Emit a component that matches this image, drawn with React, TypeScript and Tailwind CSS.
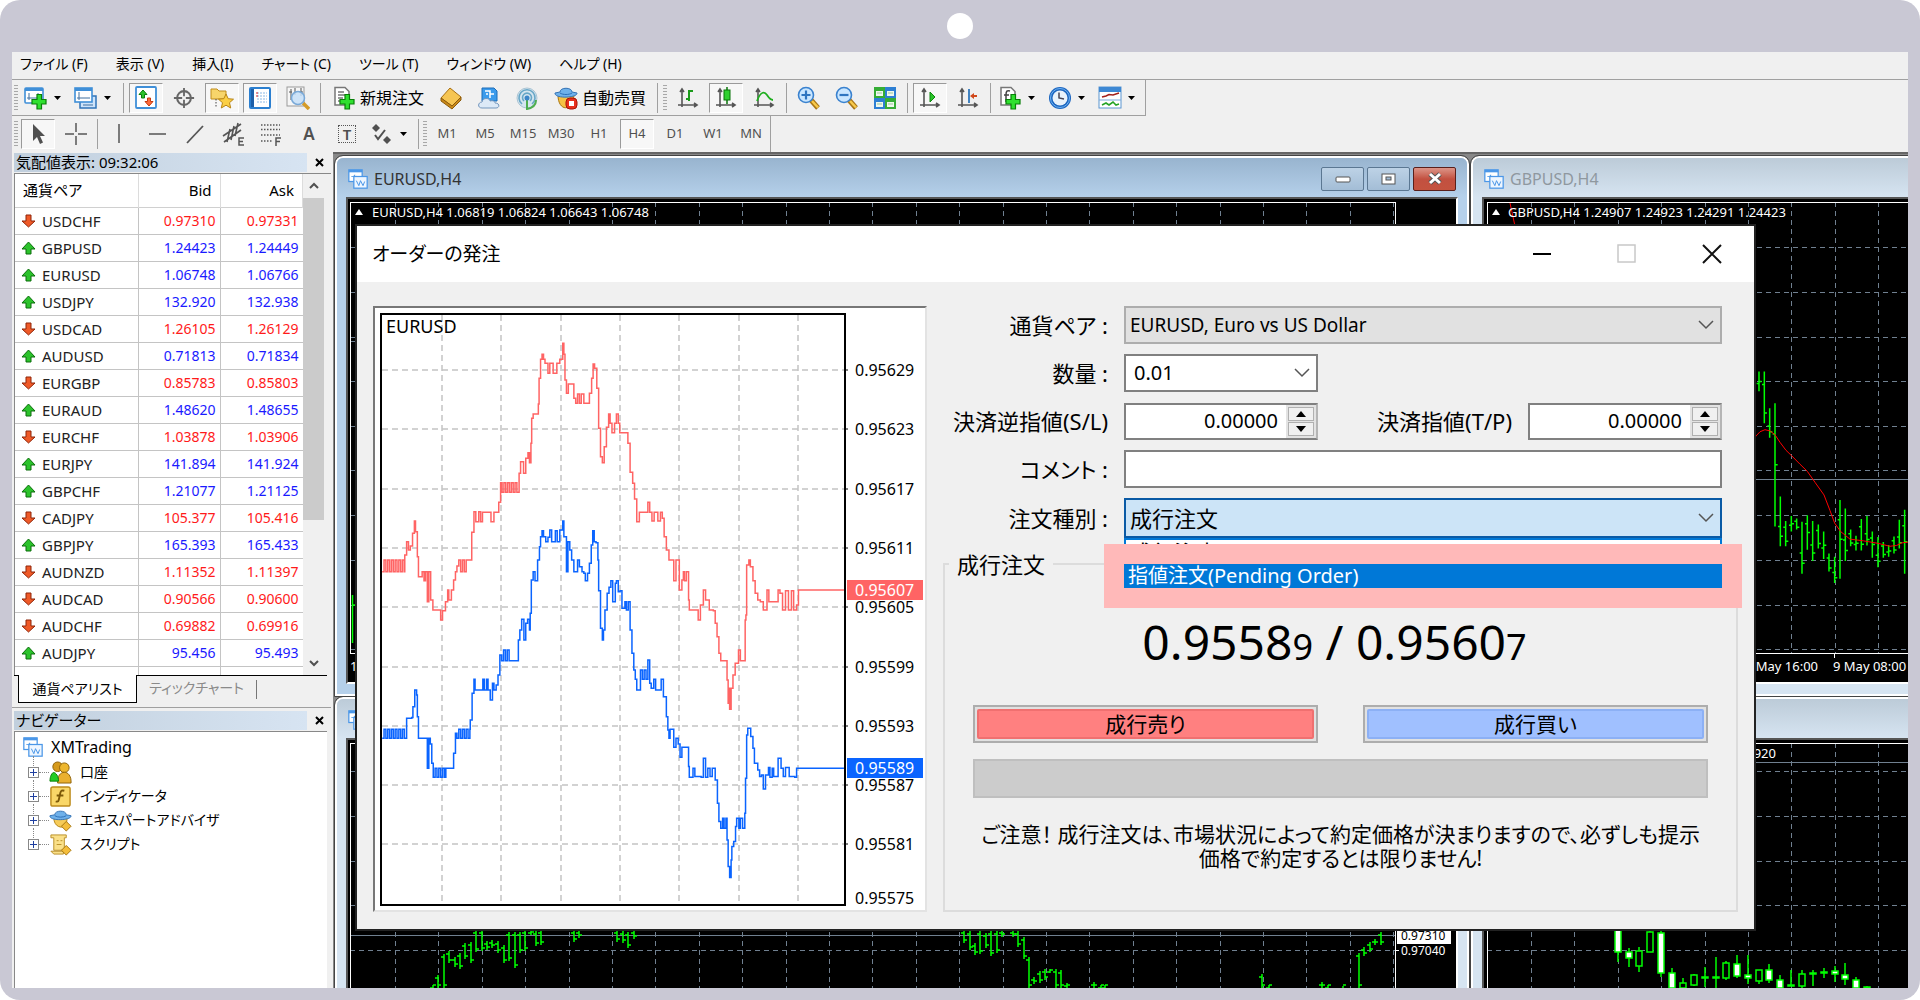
import type { ReactNode } from "react";

type Point = [number, number];

const menus = ["ファイル (F)", "表示 (V)", "挿入(I)", "チャート (C)", "ツール (T)", "ウィンドウ (W)", "ヘルプ (H)"];

const quotes: [string, string, string, boolean][] = [
  ["USDCHF", "0.97310", "0.97331", false],
  ["GBPUSD", "1.24423", "1.24449", true],
  ["EURUSD", "1.06748", "1.06766", true],
  ["USDJPY", "132.920", "132.938", true],
  ["USDCAD", "1.26105", "1.26129", false],
  ["AUDUSD", "0.71813", "0.71834", true],
  ["EURGBP", "0.85783", "0.85803", false],
  ["EURAUD", "1.48620", "1.48655", true],
  ["EURCHF", "1.03878", "1.03906", false],
  ["EURJPY", "141.894", "141.924", true],
  ["GBPCHF", "1.21077", "1.21125", true],
  ["CADJPY", "105.377", "105.416", false],
  ["GBPJPY", "165.393", "165.433", true],
  ["AUDNZD", "1.11352", "1.11397", false],
  ["AUDCAD", "0.90566", "0.90600", false],
  ["AUDCHF", "0.69882", "0.69916", false],
  ["AUDJPY", "95.456", "95.493", true],
];

const timeframes = ["M1", "M5", "M15", "M30", "H1", "H4", "D1", "W1", "MN"];

// Quick up/down ticks between two price levels
const wiggle = (from: number, to: number, top: number, bottom: number): Point[] => {
  const points: Point[] = [];
  for (let x = from, i = 0; x <= to; x += 5, i++) points.push([x, i % 2 ? top : bottom]);
  return points;
};

// Prices jump from tick to tick, so the line is drawn as steps
const stepPath = (points: Point[]) => points.map(([x, y], i) => (i ? `H${x}V${y}` : `M${x} ${y}`)).join("");

const askLine: Point[] = [
  ...wiggle(60, 120, 780, 815),
  [121, 765], [126, 725], [131, 750], [136, 738], [142, 700], [147, 663], [150, 695], [155, 770], [158, 830], [163, 830],
  [168, 815], [173, 842], [177, 815], [182, 905], [186, 815], [191, 900], [197, 930], [211, 930], [218, 960], [223, 932],
  [231, 905], [237, 870], [240, 900], [247, 870], [253, 840], [258, 815], [262, 798], [267, 780], [272, 815], [277, 780],
  [282, 815], [287, 780], [298, 780], [302, 697], [308, 635], [313, 665], [321, 635], [326, 665], [331, 637], [347, 637],
  [354, 665], [362, 637], [371, 637], [375, 607], [380, 548],
  ...wiggle(384, 425, 548, 577),
  [430, 520], [434, 485], [438, 485], [442, 520], [448, 475], [454, 458], [458, 488], [462, 430], [464, 355], [468, 342],
  [478, 342], [482, 312], [484, 235], [488, 178], [492, 163], [496, 178], [500, 190], [504, 190], [508, 220], [513, 190],
  [518, 190], [522, 220], [526, 220], [532, 190], [540, 178], [548, 130], [551, 163], [554, 240], [558, 280], [563, 252],
  [573, 252], [578, 295], [583, 310], [588, 282], [593, 310], [598, 282], [605, 310], [614, 310], [620, 280], [626, 235],
  [630, 192], [634, 205], [640, 265], [645, 385], [650, 470], [655, 488], [660, 440], [666, 382], [672, 342], [676, 370],
  [681, 398], [688, 370], [693, 342], [698, 370], [702, 398], [718, 398], [724, 430], [730, 517], [737, 550], [742, 597],
  [748, 665], [755, 637], [773, 637], [778, 607], [783, 637], [789, 663], [795, 637], [800, 637], [805, 663], [812, 637],
  [817, 655], [822, 710], [828, 750], [835, 780], [845, 780], [848, 842], [854, 780], [863, 870], [870, 840], [874, 815],
  [877, 842], [882, 815], [888, 900], [890, 930], [908, 930], [914, 960], [920, 915], [928, 870], [934, 900], [944, 930],
  [955, 932], [960, 970], [965, 1010], [970, 1060], [975, 1082], [988, 1082], [992, 1140], [995, 1210], [996, 1165],
  [999, 1228], [1003, 1165], [1008, 1125], [1014, 1090], [1023, 1050], [1028, 1082], [1040, 1082], [1041, 960],
  [1043, 945], [1045, 795], [1051, 780], [1055, 800], [1062, 842], [1068, 880], [1075, 900], [1082, 905], [1090, 930],
  [1100, 870], [1105, 905], [1122, 905], [1130, 870], [1135, 880], [1142, 930], [1150, 872], [1158, 930], [1166, 872],
  [1172, 930], [1180, 915], [1185, 870], [1308, 870],
];

const bidLine: Point[] = [
  ...wiggle(60, 120, 1288, 1315),
  [126, 1255], [140, 1253], [143, 1220], [148, 1170], [153, 1185], [155, 1250], [158, 1315], [176, 1315], [182, 1405],
  [186, 1315], [190, 1332], [194, 1390],
  ...wiggle(198, 228, 1405, 1432),
  [232, 1405], [248, 1405], [253, 1360], [258, 1300],
  ...wiggle(262, 297, 1288, 1315),
  [298, 1260], [303, 1180], [308, 1138], [311, 1170], [326, 1170], [332, 1138], [336, 1170], [342, 1138], [346, 1170],
  [352, 1200], [358, 1150], [362, 1170], [368, 1155], [373, 1125], [378, 1065],
  ...wiggle(383, 405, 1050, 1082),
  [424, 1082], [428, 1020], [432, 990], [437, 958], [443, 1020], [448, 970], [453, 958], [458, 990], [460, 940],
  [463, 840], [468, 815], [473, 842], [480, 780], [485, 740], [488, 710], [492, 692], [496, 710], [502, 725], [508, 712],
  [513, 690], [518, 725], [528, 692], [533, 725], [540, 690], [548, 663], [551, 710], [558, 815], [562, 725], [567, 750],
  [572, 780], [578, 815], [588, 780], [593, 800], [600, 815], [605, 820], [609, 842], [615, 820], [620, 790], [625, 735],
  [629, 692], [633, 725], [638, 728], [643, 780], [645, 872], [650, 985], [655, 1020], [658, 990], [662, 930], [668, 880],
  [673, 862], [678, 842], [683, 905], [690, 850], [693, 842], [698, 875], [703, 872], [708, 925], [716, 905], [720, 930],
  [725, 905], [730, 990], [735, 1060], [740, 1110], [744, 1138], [748, 1170], [753, 1170], [758, 1110], [763, 1138],
  [768, 1110], [773, 1138], [778, 1080], [783, 1150], [787, 1165], [794, 1138], [799, 1170], [810, 1170], [814, 1138],
  [820, 1190], [828, 1250], [832, 1290], [835, 1315], [838, 1288], [848, 1342], [854, 1315], [860, 1332], [865, 1372],
  [870, 1342], [885, 1342], [888, 1400], [890, 1432], [900, 1405], [905, 1430], [922, 1432], [928, 1375], [934, 1432],
  [940, 1405], [946, 1430], [952, 1405], [960, 1440], [966, 1510], [970, 1565], [975, 1585], [980, 1555], [984, 1585],
  [989, 1555], [992, 1620], [995, 1700], [999, 1733], [1003, 1680], [1005, 1640], [1010, 1625], [1015, 1580],
  [1018, 1555], [1024, 1585], [1028, 1555], [1034, 1585], [1040, 1540], [1042, 1435], [1045, 1305], [1048, 1285],
  [1056, 1310], [1062, 1345], [1066, 1390], [1075, 1410], [1080, 1430], [1085, 1425], [1090, 1467], [1096, 1425],
  [1104, 1403], [1108, 1432], [1114, 1405], [1118, 1430], [1130, 1375], [1138, 1405], [1144, 1430], [1150, 1403],
  [1160, 1430], [1175, 1432], [1180, 1405], [1308, 1405],
];

const scaleLabels = ["0.95629", "0.95623", "0.95617", "0.95611", "0.95605", "0.95599", "0.95593", "0.95587", "0.95581"];

// [x, high, low]
const gbpBars: [number, number, number][] = [
  [177, 75, 122], [193, 75, 198], [209, 162, 232], [225, 150, 443], [241, 372, 490], [257, 430, 490], [274, 418, 455],
  [290, 424, 450], [306, 432, 555], [322, 416, 498], [338, 430, 525], [355, 438, 495], [371, 455, 520], [387, 507, 550],
  [404, 515, 577], [420, 380, 567], [436, 400, 525], [452, 450, 490], [468, 465, 500], [484, 425, 500], [501, 418, 488],
  [517, 455, 517], [534, 468, 540], [550, 480, 517], [566, 487, 515], [582, 467, 507], [598, 427, 495], [614, 403, 555],
];

const chfBars: [number, number, number][] = [
  [433, 985, 988], [438, 975, 988], [444, 954, 988], [449, 951, 963], [455, 957, 967], [460, 953, 969], [465, 943, 959],
  [471, 942, 963], [476, 930, 952], [482, 930, 951], [487, 941, 950], [492, 940, 948], [498, 941, 953], [504, 945, 963],
  [509, 932, 961], [515, 932, 968], [520, 932, 953], [525, 930, 951], [531, 930, 935], [536, 931, 946], [541, 930, 945],
  [574, 930, 942], [579, 930, 938], [617, 930, 942], [623, 931, 943], [628, 932, 948], [634, 930, 939], [964, 930, 943],
  [970, 931, 950], [975, 943, 955], [980, 931, 954], [986, 933, 948], [991, 931, 956], [997, 931, 953], [1002, 930, 937],
  [1013, 930, 937], [1018, 931, 947], [1024, 937, 959], [1029, 957, 988], [1034, 977, 984], [1040, 971, 983],
  [1045, 969, 980], [1050, 969, 973], [1056, 969, 988], [1061, 970, 988], [1067, 983, 988], [1094, 982, 988],
  [1101, 985, 988], [1105, 985, 988], [1262, 974, 988], [1269, 985, 988], [1322, 982, 988], [1328, 985, 988],
  [1343, 986, 988], [1359, 953, 988], [1364, 947, 956], [1370, 942, 952], [1375, 939, 945], [1381, 932, 945],
];

// [x, high, low, body top, body bottom, filled]
const candles: [number, number, number, number, number, boolean][] = [
  [1618, 928, 962, 930, 952, true], [1629, 948, 967, 952, 958, true], [1639, 947, 972, 951, 966, false],
  [1650, 930, 952, 932, 952, false], [1661, 930, 977, 933, 973, true], [1672, 968, 988, 973, 988, true],
  [1683, 978, 988, 983, 988, false], [1694, 974, 986, 975, 985, false], [1705, 967, 987, 977, 978, true],
  [1716, 957, 988, 977, 978, true], [1726, 961, 980, 963, 978, false], [1737, 955, 978, 964, 976, true],
  [1748, 955, 984, 975, 978, true], [1759, 970, 984, 970, 981, false], [1769, 964, 983, 970, 980, true],
  [1780, 975, 988, 980, 988, true], [1791, 970, 986, 985, 986, true], [1802, 970, 988, 974, 986, false],
  [1813, 970, 986, 973, 974, true], [1824, 968, 978, 972, 973, true], [1835, 966, 982, 971, 974, true],
  [1845, 963, 985, 975, 979, true], [1856, 977, 988, 980, 988, true], [1867, 986, 988, 987, 988, true],
];

const Grip = () => (
  <span className="mr-px ml-0.5 h-[26px] w-1 shrink-0 bg-[repeating-linear-gradient(#a8a8a8_0_1px,#efefef_1px_3px)]" />
);

const Separator = () => <span className="mx-0.5 h-[30px] w-px shrink-0 bg-[#a0a0a0]" />;

const Caret = () => (
  <svg width="7" height="4" viewBox="0 0 7 4" className="shrink-0">
    <path d="M0 0h7L3.500 4z" fill="#000" />
  </svg>
);

type ToolProps = { label: string; pressed?: boolean; caret?: boolean; text?: string; children?: ReactNode };

const Tool = ({ label, pressed, caret, text, children }: ToolProps) => (
  <button
    type="button"
    aria-label={label}
    aria-pressed={pressed}
    className={`flex h-[30px] shrink-0 items-center ${
      text ? "gap-1 px-2" : caret ? "w-[50px] gap-1.5 pl-1" : "mx-0.5 w-[34px] justify-center"
    } ${pressed ? "border border-t-[#9a9a9a] border-l-[#9a9a9a] border-r-white border-b-white bg-[#f7f7f7]" : ""}`}
  >
    {children}
    {text && <span className="text-[16px] leading-5 whitespace-nowrap">{text}</span>}
    {caret && <Caret />}
  </button>
);

const Icon = ({ children, size = 24 }: { children: ReactNode; size?: number }) => (
  <svg width={size} height={size} viewBox="0 0 24 24" fill="none" className="shrink-0">
    {children}
  </svg>
);

const Plus = () => (
  <path d="M13 8.500h4.500v5H22v4.500h-4.500v5H13v-5H8v-4.500h5z" fill="#2fe02f" stroke="#087f08" strokeWidth="1.200" />
);

const Sheet = () => <path d="M3 1.500h10l4 4V19H3z" fill="#fff" stroke="#777" strokeWidth="1.500" />;

const Axes = () => (
  <path d="M6 4v17M2 19h18M4 6l2-3 2 3M18 17l3 2-3 2" stroke="#555" strokeWidth="1.600" />
);

const ChartIcon = () => (
  <Icon size={20}>
    <rect x="1" y="1" width="16" height="14" fill="#fff" stroke="#4b97e8" strokeWidth="1.500" />
    <path d="M1 2.500h16" stroke="#4b97e8" strokeWidth="3" />
    <path d="M4 9h3l1-2v4l2-2h4" stroke="#4b97e8" />
    <rect x="7" y="9" width="16" height="14" fill="#eef6ff" stroke="#4b97e8" strokeWidth="1.500" />
    <path d="m10 14 3 6 2-6 3 6 2-5" stroke="#4b97e8" strokeWidth="1.200" />
  </Icon>
);

const Hat = () => (
  <>
    <path d="M6 6c0-5 12-5 12 0l5 1c1 5-23 6-22 0z" fill="#6fb1ea" stroke="#3573b5" />
    <path d="M6 7c3 2 9 2 12 0" stroke="#2d6fb5" />
  </>
);

const Magnifier = ({ sign }: { sign: string }) => (
  <Icon>
    <path d="m14 14 7 8" stroke="#a87516" strokeWidth="5" />
    <path d="m15 15 6 6.500" stroke="#f8c94a" strokeWidth="2.500" />
    <circle cx="9" cy="9" r="7.500" fill="#c9e6ff" stroke="#3a82cf" strokeWidth="1.600" />
    <path d={sign} stroke="#2f75c0" strokeWidth="2.200" />
  </Icon>
);

const Arrow = ({ up }: { up: boolean }) => (
  <svg width="15" height="14" viewBox="0 0 15 14" className="shrink-0">
    {up ? (
      <path d="M7.500 1 14 8h-4v5H5V8H1z" fill="#2cc32c" stroke="#0b6d0b" />
    ) : (
      <path d="M7.500 13 1 7h4V1h5v6h4z" fill="#ef5a28" stroke="#8f2408" />
    )}
  </svg>
);

const Toolbars = () => (
  <div className="shrink-0 border-t border-[#a0a0a0] bg-[#f0f0f0]">
    <div className="flex">
      <div className="flex h-9 items-center gap-px border-r border-b border-[#a0a0a0] pr-px">
        <Grip />
        <div className="flex">
          <Tool label="新規チャート" caret>
            <Icon>
              <rect x="1" y="2" width="18" height="15" rx="1" fill="#fff" stroke="#3f8fd8" strokeWidth="1.600" />
              <path d="M1 3.500h18" stroke="#3f8fd8" strokeWidth="3" />
              <path d="M5 7v7M3 12h13M14 7v3" stroke="#3f6f9f" />
              <Plus />
            </Icon>
          </Tool>
          <Tool label="チャートの組表示" caret>
            <Icon>
              <rect x="6" y="10" width="16" height="12" fill="#cfe4fa" stroke="#2f73b8" strokeWidth="1.500" />
              <rect x="1" y="2" width="17" height="14" fill="#fff" stroke="#3f8fd8" strokeWidth="1.600" />
              <path d="M1 3.500h17" stroke="#3f8fd8" strokeWidth="3" />
              <path d="M5 6v8M3 12h13M9 19h10" stroke="#3f6f9f" />
            </Icon>
          </Tool>
        </div>
        <Separator />
        <div className="flex">
          <Tool label="気配値表示" pressed>
            <Icon>
              <rect x="2" y="1" width="20" height="21" rx="1" fill="#fff" stroke="#3f8fd8" strokeWidth="1.800" />
              <path d="m9 4 4 4.500h-2.500V12h-3V8.500H5z" fill="#2cc32c" stroke="#0b7d0b" />
              <path d="m15 20-4-4.500h2.500V12h3v3.500H19z" fill="#ff6a3a" stroke="#c43a10" />
            </Icon>
          </Tool>
          <Tool label="データウィンドウ">
            <Icon size={22}>
              <circle cx="12" cy="12" r="7.500" stroke="#666" strokeWidth="2.200" />
              <path d="M12 1v9M12 14v9M1 12h9M14 12h9" stroke="#666" strokeWidth="2" />
            </Icon>
          </Tool>
          <Tool label="ナビゲーター" pressed>
            <Icon>
              <path d="M1 3h6l2 2h7v8H1z" fill="#f7d56b" stroke="#c08d1c" />
              <path d="M6 13v9" stroke="#444" strokeDasharray="1.500 1.500" />
              <path d="m16 8 2.200 4.700 5.300.5-4 3.500 1.200 5.300-4.700-2.800-4.700 2.800 1.200-5.300-4-3.500 5.300-.5z" fill="#fbcf45" stroke="#b98516" />
            </Icon>
          </Tool>
          <Tool label="ターミナル" pressed>
            <Icon>
              <rect x="2" y="2" width="20" height="20" rx="1" fill="#fff" stroke="#2b7fd0" strokeWidth="2" />
              <path d="M4.500 3v18" stroke="#1e5fa8" strokeWidth="3" />
              <path d="M9 7h10M9 10h10M9 13h10M9 16h10" stroke="#8ab8e6" strokeDasharray="2 1" />
              <path d="M8 7h2M8 10h2" stroke="#d22" />
            </Icon>
          </Tool>
          <Tool label="ストラテジーテスター">
            <Icon>
              <rect x="1" y="1" width="17" height="19" fill="#f6f6f6" stroke="#999" />
              <path d="M5 3v11M9 2v7M15 2v8M3 6h3M13 6h4" stroke="#555" />
              <path d="m17 17 6 6" stroke="#d59b28" strokeWidth="3.500" />
              <circle cx="12" cy="12" r="6.500" fill="#c5dff8" fillOpacity=".85" stroke="#79a9d8" strokeWidth="1.500" />
            </Icon>
          </Tool>
        </div>
        <Separator />
        <div className="flex">
          <Tool label="新規注文" text="新規注文">
            <Icon>
              <Sheet />
              <path d="M6 6h6M6 9h8M6 12h5M6 15h4" stroke="#777" strokeWidth="1.500" />
              <Plus />
            </Icon>
          </Tool>
          <Tool label="メタエディター">
            <Icon>
              <path d="M2 12 11 2l11 9-9 9z" fill="#f6c552" stroke="#a86f12" />
              <path d="m2 12 11 8 9-9v3l-9 9L2 15z" fill="#c98918" stroke="#8c5b0c" />
            </Icon>
          </Tool>
          <Tool label="マーケット">
            <Icon>
              <path d="M5 2h12l3 3v10H5z" fill="#3a9bec" stroke="#1d6cb7" />
              <path d="M8 5h5v7M13 8h4M9 8h2" stroke="#fff" strokeWidth="1.500" />
              <path d="M5 22c-5 0-4-6 0-6 1-5 8-4 8-1 4-1 5 1 5 2 5 0 5 5 1 5z" fill="#dce9f7" stroke="#7396bd" />
            </Icon>
          </Tool>
          <Tool label="シグナル">
            <Icon>
              <circle cx="12" cy="12" r="10" fill="#d5e5ef" stroke="#aac4d4" />
              <path d="M7 18a8 8 0 1 1 10 0M9 15a4.500 4.500 0 1 1 6 0" stroke="#68a7c7" strokeWidth="1.600" />
              <path d="M12 12v11c5-1 9-4 9-9" stroke="#4fae4f" strokeWidth="2" />
              <circle cx="12" cy="12" r="2.500" fill="#3c86c8" />
            </Icon>
          </Tool>
          <Tool label="自動売買" text="自動売買">
            <Icon>
              <path d="M4 9c0 17 15 17 16 0z" fill="#f6c244" stroke="#a8740d" />
              <Hat />
              <rect x="12" y="12" width="11" height="11" rx="4" fill="#e8301c" stroke="#a81408" />
              <rect x="15" y="15" width="5" height="5" fill="#fff" />
            </Icon>
          </Tool>
        </div>
        <Separator />
        <Grip />
        <div className="flex">
          <Tool label="バーチャート">
            <Icon>
              <Axes />
              <path d="M13 4v11M10 13h3M13 5h4" stroke="#1a9a1a" strokeWidth="2" />
            </Icon>
          </Tool>
          <Tool label="ローソク足" pressed>
            <Icon>
              <Axes />
              <path d="M13 1v17" stroke="#087508" strokeWidth="1.500" />
              <rect x="10" y="4" width="6" height="10" fill="#2fd02f" stroke="#087508" />
            </Icon>
          </Tool>
          <Tool label="ラインチャート">
            <Icon>
              <Axes />
              <path d="M5 15C9 4 13 6 15 9s3 5 6 5" stroke="#1fae1f" strokeWidth="1.800" />
            </Icon>
          </Tool>
        </div>
        <Separator />
        <div className="flex">
          <Tool label="ズームイン">
            <Magnifier sign="M9 4.500v9M4.500 9h9" />
          </Tool>
          <Tool label="ズームアウト">
            <Magnifier sign="M4.500 9h9" />
          </Tool>
          <Tool label="チャートの整列">
            <Icon>
              <path d="M1 1h11v11H1zM12 12h11v11H12z" fill="#35ad35" />
              <path d="M12 1h11v11H12zM1 12h11v11H1z" fill="#2d7fd3" />
              <path d="M3 5h7v5H3zM14 5h7v5h-7zM3 16h7v5H3zM14 16h7v5h-7z" fill="#eef8ee" />
              <path d="M4 7h5M15 7h5M4 18h5M15 18h5" stroke="#9bc79b" />
            </Icon>
          </Tool>
        </div>
        <Separator />
        <div className="flex">
          <Tool label="自動スクロール" pressed>
            <Icon>
              <Axes />
              <path d="m12 6 5 5-5 5z" fill="#2bc52b" stroke="#0c850c" />
            </Icon>
          </Tool>
          <Tool label="チャートシフト">
            <Icon>
              <Axes />
              <path d="M13 3v14" stroke="#2e76bb" strokeWidth="1.800" />
              <path d="m14 10 4-3v2h3v2h-3v2z" fill="#d1481b" />
            </Icon>
          </Tool>
        </div>
        <Separator />
        <div className="flex">
          <Tool label="インディケータ" caret>
            <Icon>
              <Sheet />
              <path d="M12 5c-3-1-4 0-4 4v7M6 9h5" stroke="#444" strokeWidth="1.500" />
              <Plus />
            </Icon>
          </Tool>
          <Tool label="時間軸設定" caret>
            <Icon>
              <circle cx="12" cy="12" r="11" fill="#1c66c0" />
              <circle cx="12" cy="12" r="9.500" stroke="#6fb4f5" />
              <circle cx="12" cy="12" r="7.500" fill="#e8f2fb" />
              <path d="M11 6.500V12l5 1" stroke="#445" strokeWidth="1.500" />
            </Icon>
          </Tool>
          <Tool label="定型チャート" caret>
            <Icon>
              <rect x="1" y="1" width="22" height="21" fill="#fff" stroke="#5b95d0" />
              <path d="M1 3.500h22" stroke="#3d88d4" strokeWidth="5" />
              <path d="M1 14h22" stroke="#7aa9da" />
              <path d="m4 11 4-1 3-1.500 4 .5 6-2" stroke="#a3201a" strokeWidth="1.600" />
              <path d="m4 19 4-2 3 2 4-3 3 3 3-1" stroke="#25a325" strokeWidth="1.600" />
            </Icon>
          </Tool>
        </div>
      </div>
    </div>

    <div className="flex h-9 items-center">
      <Grip />
      <div className="flex">
        <Tool label="カーソル" pressed>
          <Icon>
            <path d="M7 2v17l4-4 3 7 3-1.500-3-6.500h5z" fill="#505050" />
          </Icon>
        </Tool>
        <Tool label="クロスヘア">
          <Icon>
            <path d="M12 1v9M12 14v9M1 12h9M14 12h9" stroke="#555" strokeWidth="1.500" />
          </Icon>
        </Tool>
        <Separator />
        <Tool label="垂直線">
          <Icon><path d="M12 2v19" stroke="#555" strokeWidth="1.500" /></Icon>
        </Tool>
        <Tool label="水平線">
          <Icon><path d="M4 12h17" stroke="#555" strokeWidth="1.500" /></Icon>
        </Tool>
        <Tool label="トレンドライン">
          <Icon><path d="M4 21 20 4" stroke="#555" strokeWidth="1.800" /></Icon>
        </Tool>
        <Tool label="チャネル">
          <Icon>
            <path d="M2 14 20 2M3 20 20 8M6 20l3-13M10 18l3-14M14 14l3-13" stroke="#555" strokeWidth="1.600" />
            <path d="M23 16h-5v7h5M18 19.500h4" stroke="#555" strokeWidth="1.500" />
          </Icon>
        </Tool>
        <Tool label="フィボナッチ">
          <Icon>
            <path d="M2 3h19M2 7.500h19M2 13h19M2 19h12" stroke="#555" strokeWidth="1.500" strokeDasharray="1.500 1.500" />
            <path d="M17 24v-8h5M17 19.500h4" stroke="#555" strokeWidth="1.500" />
          </Icon>
        </Tool>
        <Tool label="テキスト">
          <span className="text-[17px] font-semibold text-[#505050]">A</span>
        </Tool>
        <Tool label="テキストラベル">
          <span className="flex size-[18px] items-center justify-center border border-dotted border-[#555] text-[15px] font-semibold text-[#505050]">T</span>
        </Tool>
        <Tool label="アロー" caret>
          <Icon>
            <path d="m6 2 4 4-4 4-4-4zM17 14l4 4-4 4-4-4z" fill="#505050" />
            <path d="m5 13 3 4 7-9" stroke="#505050" strokeWidth="2" />
          </Icon>
        </Tool>
      </div>
      <Separator />
      <Grip />
      <div className="flex h-full items-center border-r border-[#a0a0a0]">
        {timeframes.map((frame) => (
          <Tool key={frame} label={frame} pressed={frame === "H4"}>
            <span className="text-[13px] text-[#505050]">{frame}</span>
          </Tool>
        ))}
      </div>
    </div>
  </div>
);

const PanelHeader = ({ title }: { title: string }) => (
  <div className="flex h-5 shrink-0 items-center pl-0.5">
    <h2 className="flex-1 bg-linear-to-r from-[#c1cfdd] to-[#d7e4f2] pl-0.5 text-[15px] leading-[19px]">{title}</h2>
    <button type="button" aria-label={`${title} を閉じる`} className="flex w-6 justify-center">
      <svg width="9" height="9" viewBox="0 0 9 9">
        <path d="m1 1 7 7M8 1 1 8" stroke="#000" strokeWidth="2" />
      </svg>
    </button>
  </div>
);

const MarketWatch = () => (
  <section className="flex flex-col">
    <PanelHeader title="気配値表示: 09:32:06" />
    <div className="mt-px ml-0.5 flex h-[502px] overflow-hidden border-t border-l border-[#888] bg-white">
      <table className="w-[288px] shrink-0 self-start border-collapse">
        <thead>
          <tr className="h-[33px] border-b border-[#d0d0d0] text-[15px]">
            <th className="w-[123px] border-r border-[#dcdcdc] pl-2 text-left font-normal">通貨ペア</th>
            <th className="w-[82px] border-r border-[#dcdcdc] pr-2 text-right font-normal">Bid</th>
            <th className="border-r border-[#dcdcdc] pr-2 text-right font-normal">Ask</th>
          </tr>
        </thead>
        <tbody>
          {quotes.map(([symbol, bid, ask, up]) => (
            <tr key={symbol} className="h-[27px] border-b border-[#c4c4c4]">
              <td className="border-r border-[#c4c4c4] pl-1.5 text-[15px] leading-5 text-[#222]">
                <span className="flex items-center gap-1.5">
                  <Arrow up={up} />
                  {symbol}
                </span>
              </td>
              <td className={`border-r border-[#c4c4c4] pr-1 text-right text-[14px] leading-5 ${up ? "text-[#1a1aff]" : "text-[#ff1a1a]"}`}>
                {bid}
              </td>
              <td className={`pr-1 text-right text-[14px] leading-5 ${up ? "text-[#1a1aff]" : "text-[#ff1a1a]"}`}>{ask}</td>
            </tr>
          ))}
          <tr className="h-[27px]">
            <td className="border-r border-[#c4c4c4]" />
            <td className="border-r border-[#c4c4c4]" />
            <td />
          </tr>
        </tbody>
      </table>
      <div className="flex w-[21px] flex-col items-center bg-[#f0f0f0]">
        <svg width="10" height="8" viewBox="0 0 10 8" className="my-2">
          <path d="m1 6 4-4 4 4" fill="none" stroke="#505050" strokeWidth="2" />
        </svg>
        <div className="h-[322px] w-full bg-[#cbcbcb]" />
        <svg width="10" height="8" viewBox="0 0 10 8" className="mt-auto mb-2">
          <path d="m1 2 4 4 4-4" fill="none" stroke="#505050" strokeWidth="2" />
        </svg>
      </div>
      <div className="flex-1 bg-[#f0f0f0]" />
    </div>
    <div className="mr-1 ml-0.5 flex h-7 items-start border-t border-black text-[14px] leading-6">
      <button type="button" className="-mt-px ml-1 h-7 w-[119px] border border-t-0 border-black bg-white">
        通貨ペアリスト
      </button>
      <button type="button" className="ml-3 text-[#8a8a8a]">ティックチャート</button>
      <span className="mt-1 ml-3 h-[19px] w-px bg-[#777]" />
    </div>
  </section>
);

const tree: [string, ReactNode][] = [
  [
    "口座",
    <>
      <circle cx="9" cy="6" r="5" fill="#d69a1c" stroke="#8d6108" />
      <circle cx="16" cy="7" r="5" fill="#edb62e" stroke="#8d6108" />
      <path d="M9 23c-1-15 15-15 14 0z" fill="#eab030" stroke="#8d6108" />
      <path d="M1 21c0-5 2-9 4-9s5 4 5 9z" fill="#22cc22" stroke="#0a7d0a" />
    </>,
  ],
  [
    "インディケータ",
    <>
      <rect x="2" y="2" width="20" height="20" rx="2" fill="#f9d768" stroke="#bd8c1d" strokeWidth="1.500" />
      <path d="M16 6c-4-1-4 1-5 6s-1 6-4 5M8 11h7" stroke="#7c5908" strokeWidth="2" />
    </>,
  ],
  [
    "エキスパートアドバイザ",
    <>
      <path d="M5 9c0 10 9 12 13 8l1-8z" fill="#f6cb58" stroke="#b3841a" />
      <Hat />
      <path d="m18 13 5 5-5 5-5-5z" fill="#f4bd3a" stroke="#a5750d" />
    </>,
  ],
  [
    "スクリプト",
    <>
      <path d="M2 2h16v3h-2v13H5V5H2z" fill="#fae089" stroke="#b98f28" />
      <path d="M8 8h2M12 8h2M8 12h5M2 19h13v3H5z" fill="#fae089" stroke="#b98f28" />
      <path d="m18 13 5 5-5 5-5-5z" fill="#f4bd3a" stroke="#a5750d" />
    </>,
  ],
];

const Navigator = () => (
  <section className="mt-1 flex min-h-0 flex-1 flex-col border-t border-[#a0a0a0] pt-0.5">
    <PanelHeader title="ナビゲーター" />
    <div className="mt-px mr-1 ml-0.5 flex-1 border-t border-l border-[#888] bg-white pt-0.5">
      <div className="flex h-[25px] items-center gap-2 pl-2 text-[16px] leading-6">
        <ChartIcon />
        XMTrading
      </div>
      <ul className="pt-px">
        {tree.map(([name, icon]) => (
          <li key={name} className="flex h-6 items-center pl-[13px] text-[14px] leading-6">
            <span className="relative flex size-[11px] items-center justify-center border border-[#888] bg-white before:absolute before:bottom-full before:h-3 before:border-l before:border-dotted before:border-[#888]">
              <svg width="7" height="7" viewBox="0 0 7 7">
                <path d="M3.500 0v7M0 3.500h7" stroke="#1f3f9f" />
              </svg>
            </span>
            <span className="w-2.5 border-t border-dotted border-[#888]" />
            <Icon size={23}>{icon}</Icon>
            <span className="pl-2">{name}</span>
          </li>
        ))}
      </ul>
    </div>
  </section>
);

type ChartWindowProps = { title?: string; active?: boolean; place: string; children: ReactNode };

const ChartWindow = ({ title, active, place, children }: ChartWindowProps) => (
  <section
    className={`absolute flex flex-col rounded-t-lg border-2 border-white px-[9px] outline outline-[#444] ${place} ${
      active ? "bg-[#b5d0ea]" : "bg-[#d6e4f1]"
    }`}
  >
    <header
      className={`-mx-[9px] flex h-[39px] shrink-0 items-center gap-1.5 rounded-t-md px-[11px] pt-0.5 ${
        active ? "bg-linear-to-b from-[#98b4cf] to-[#b5d0ea]" : "bg-linear-to-b from-[#bccbd8] to-[#d6e4f1]"
      }`}
    >
      <ChartIcon />
      <h2 className={`flex-1 text-[16px] ${active ? "text-[#333]" : "text-[#8f989f]"}`}>{title}</h2>
      {active && (
        <div className="flex gap-[3px]">
          <button type="button" aria-label="最小化" className="flex h-6 w-[43px] items-center justify-center rounded-xs border border-[#5b7792] bg-linear-to-b from-[#bdd2e6] to-[#a3bdd6]">
            <svg width="16" height="8" viewBox="0 0 16 8">
              <rect x="1" y="2" width="14" height="5" rx="1" fill="#fff" stroke="#555" />
            </svg>
          </button>
          <button type="button" aria-label="最大化" className="flex h-6 w-[43px] items-center justify-center rounded-xs border border-[#5b7792] bg-linear-to-b from-[#bdd2e6] to-[#a3bdd6]">
            <svg width="15" height="12" viewBox="0 0 15 12">
              <rect x="1" y="1" width="13" height="10" fill="#fff" stroke="#555" />
              <rect x="5" y="4" width="5" height="3" fill="#a3bdd6" stroke="#555" />
            </svg>
          </button>
          <button type="button" aria-label="閉じる" className="flex h-6 w-[43px] items-center justify-center rounded-xs border border-[#5a1f1a] bg-linear-to-b from-[#dc9488] via-[#c25040] to-[#c4533f]">
            <svg width="16" height="13" viewBox="0 0 16 13">
              <path d="m3 2 10 9M13 2 3 11" stroke="#555" strokeWidth="5" />
              <path d="m3 2 10 9M13 2 3 11" stroke="#fff" strokeWidth="3" />
            </svg>
          </button>
        </div>
      )}
    </header>
    <div className="mb-2.5 min-h-0 flex-1 border-2 border-[#555] border-r-white border-b-white bg-black">{children}</div>
  </section>
);

type GridProps = { left: number; right: number; top: number; bottom: number; rows: number[]; line: number; first: number };

const Grid = ({ left, right, top, bottom, rows, line, first }: GridProps) => {
  const columns: number[] = [];
  for (let x = first; x < right; x += 43.4) columns.push(Math.round(x));
  return (
    <g fill="none">
      <g stroke="#708090" strokeDasharray="5 4">
        {columns.map((x) => (
          <path key={x} d={`M${x}.5 ${top}V${bottom}`} />
        ))}
        {rows.map((y) => (
          <path key={y} d={`M${left} ${y}.5H${right}`} />
        ))}
      </g>
      <path d={`M${left} ${line}.5H${right}`} stroke="#708090" />
      <rect x={left + 0.5} y={top + 0.5} width={right - left} height={bottom - top} stroke="#fff" />
    </g>
  );
};

const Plot = ({ x, y, children }: { x: number; y: number; children: ReactNode }) => (
  <svg className="size-full" fontSize="13">
    <g transform={`translate(${-x} ${-y})`}>{children}</g>
  </svg>
);

const upperRows = [247, 292, 337, 381, 426, 470, 515, 560, 605, 649];
const lowerRows = [771, 816, 861, 905, 950];

const Charts = () => (
  <>
    <ChartWindow title="EURUSD,H4" active place="left-0.5 top-[2px] w-[1134px] h-[540px]">
      <Plot x={348} y={199}>
        <Grid left={350} right={1395} top={202} bottom={653} rows={upperRows} line={341} first={395} />
        <path d="M352.500 595v48M352 605h5" stroke="#0f0" strokeWidth="1.500" />
        <path d="m355 215 4-6 4 6z" fill="#fff" />
        <text x="372" y="217" fill="#fff">EURUSD,H4 1.06819 1.06824 1.06643 1.06748</text>
        <text x="350" y="671" fill="#fff">14 Apr 2022</text>
        <path d="M650 224.500h12M668 224.500h3M682 224.500h2M712 224.500h20M760 224.500h12M998 224.500h18" stroke="#0c0" />
      </Plot>
    </ChartWindow>
    <ChartWindow title="GBPUSD,H4" place="left-[1138px] -right-5 top-[2px] h-[540px]">
      <Plot x={1484} y={199}>
        <Grid left={1487} right={1960} top={202} bottom={653} rows={upperRows} line={479} first={1531} />
        <path d="m1510 203 8 37" stroke="red" />
        <path d="m1492 215 4-6 4 6z" fill="#fff" />
        <text x="1508" y="217" fill="#fff">GBPUSD,H4 1.24907 1.24923 1.24291 1.24423</text>
        <g transform="translate(1700 340) scale(.3333 .421)" fill="none">
          {gbpBars.map(([x, high, low], i) => (
            <path
              key={x}
              d={`M${x} ${high}V${low}M${x - 7} ${high + (low - high) * (i % 2 ? 0.25 : 0.6)}h7M${x} ${low - (low - high) * (i % 3 ? 0.2 : 0.5)}h8`}
              stroke="#0f0"
              strokeWidth="1.500"
              vectorEffect="non-scaling-stroke"
            />
          ))}
          <path
            d="M150 250 168 228 180 218 195 213 210 216 225 225 240 243 258 262 275 275 300 295 322 312 345 338 372 368 390 405 404 435 422 455 450 473 490 477 534 483 570 490 590 488 605 482 624 480"
            stroke="#f00"
            vectorEffect="non-scaling-stroke"
          />
        </g>
        <path d="M1834.500 653v5" stroke="#fff" />
        <text x="1818" y="671" fill="#fff" textAnchor="end">6 May 16:00</text>
        <text x="1833" y="671" fill="#fff">9 May 08:00</text>
      </Plot>
    </ChartWindow>
    <ChartWindow place="left-0.5 top-[543px] w-[1134px] h-[540px]">
      <Plot x={348} y={740}>
        <Grid left={350} right={1395} top={743} bottom={1200} rows={lowerRows} line={935} first={395} />
        <path d="M356.500 767v75" stroke="#f00" />
        {chfBars.map(([x, high, low]) => (
          <path key={x} d={`M${x} ${high}V${low}M${x - 3} ${high + 3}h3M${x} ${low - 3}h3`} stroke="#0f0" strokeWidth="1.500" />
        ))}
        <rect x="1397" y="928" width="54" height="16" fill="#fff" />
        <text x="1401" y="940" fill="#000" fontSize="12">0.97310</text>
        <text x="1401" y="955" fill="#fff" fontSize="12">0.97040</text>
        <path d="M1395 950.500h4" stroke="#fff" />
      </Plot>
    </ChartWindow>
    <ChartWindow place="left-[1138px] -right-5 top-[543px] h-[540px]">
      <Plot x={1484} y={740}>
        <Grid left={1487} right={1960} top={743} bottom={1200} rows={lowerRows} line={762} first={1531} />
        <text x="1776" y="758" fill="#fff" textAnchor="end">132.920</text>
        <path d="M1754.500 844v75" stroke="#0a0" strokeWidth="2" />
        {candles.map(([x, high, low, top, bottom, filled]) => (
          <g key={x} stroke="#0f0" strokeWidth="1.500">
            <path d={`M${x} ${high}V${low}`} />
            <rect x={x - 3} y={top} width="6" height={bottom - top} fill={filled ? "#fff" : "#000"} />
          </g>
        ))}
      </Plot>
    </ChartWindow>
  </>
);

const Chevron = () => (
  <svg width="16" height="10" viewBox="0 0 16 10" className="pointer-events-none absolute top-1/2 right-2 -translate-y-1/2">
    <path d="m1 1 7 7 7-7" fill="none" stroke="#555" strokeWidth="1.500" />
  </svg>
);

const TickChart = () => (
  <div className="shrink-0 border-2 border-[#777] border-r-[#e3e3e3] border-b-[#e3e3e3] bg-white">
    <svg width="550" height="602" fontSize="16">
      <g transform="translate(-375 -308)">
        <g stroke="#c3c3c3" strokeWidth="1.500" strokeDasharray="6 4">
          {[442, 501, 561, 620, 679, 739, 798].map((x) => (
            <path key={x} d={`M${x} 315V904`} />
          ))}
          {scaleLabels.map((label, i) => (
            <path key={label} d={`M382 ${370 + Math.round(i * 59.3)}H844`} />
          ))}
        </g>
        <g transform="translate(360 300) scale(.37 .3333)" fill="none" strokeWidth="1.500">
          <path d={stepPath(bidLine)} stroke="#0a64ff" vectorEffect="non-scaling-stroke" />
          <path d={stepPath(askLine)} stroke="#ff6464" vectorEffect="non-scaling-stroke" />
        </g>
        <rect x="381" y="314" width="464" height="591" fill="none" stroke="#000" strokeWidth="2" />
        <text x="386" y="333" fontSize="18">EURUSD</text>
        {scaleLabels.map((label, i) => (
          <g key={label}>
            <path d={`M845 ${370 + Math.round(i * 59.3)}h3`} stroke="#000" />
            <text x="855" y={376 + Math.round(i * 59.3)}>{label}</text>
          </g>
        ))}
        <text x="855" y="904">0.95575</text>
        <rect x="847" y="580" width="76" height="20" fill="#ff6464" />
        <text x="855" y="596" fill="#fff">0.95607</text>
        <rect x="847" y="758" width="76" height="20" fill="#0a64ff" />
        <text x="855" y="774" fill="#fff">0.95589</text>
      </g>
    </svg>
  </div>
);

const PriceInput = ({ id }: { id: string }) => (
  <div className="flex h-[37px] w-[194px] border-2 border-[#808080] border-r-[#b5b5b5] bg-white">
    <input id={id} defaultValue="0.00000" className="w-full min-w-0 pr-2 text-right text-[20px] outline-none" />
    <div className="flex w-[30px] shrink-0 flex-col gap-px bg-[#e3e3e3] p-0.5">
      <button type="button" aria-label="上げる" className="flex flex-1 items-center justify-center border border-[#b0b0b0] bg-[#f0f0f0]">
        <svg width="10" height="6" viewBox="0 0 10 6"><path d="m5 0 5 6H0z" /></svg>
      </button>
      <button type="button" aria-label="下げる" className="flex flex-1 items-center justify-center border border-[#b0b0b0] bg-[#f0f0f0]">
        <svg width="10" height="6" viewBox="0 0 10 6"><path d="M0 0h10L5 6z" /></svg>
      </button>
    </div>
  </div>
);

const OrderDialog = () => (
  <section role="dialog" aria-labelledby="order-title" className="absolute top-[72px] right-[154px] left-6 flex flex-col bg-[#f0f0f0] outline-2 outline-[#222]">
    <header className="flex h-14 items-center bg-white pl-[15px]">
      <h1 id="order-title" className="flex-1 text-[19px]">オーダーの発注</h1>
      <button type="button" aria-label="最小化" className="flex w-[85px] justify-center">
        <svg width="20" height="20" viewBox="0 0 20 20"><path d="M1 10h18" stroke="#000" strokeWidth="2" /></svg>
      </button>
      <button type="button" aria-label="最大化" disabled className="flex w-[85px] justify-center">
        <svg width="20" height="20" viewBox="0 0 20 20"><rect x="1" y="1" width="17" height="17" fill="none" stroke="#c8c8c8" strokeWidth="1.500" /></svg>
      </button>
      <button type="button" aria-label="閉じる" className="flex w-[85px] justify-center">
        <svg width="20" height="20" viewBox="0 0 20 20"><path d="m1 1 18 18M19 1 1 19" stroke="#111" strokeWidth="2" /></svg>
      </button>
    </header>

    <div className="flex gap-4 px-4 pt-6 pb-[17px]">
      <TickChart />
      <form className="flex min-w-0 flex-1 flex-col">
        <div className="grid grid-cols-[165px_1fr] items-center gap-x-4 gap-y-2.5 pr-4 text-[22px] leading-6">
          <label htmlFor="symbol" className="text-right">通貨ペア :</label>
          <div className="relative">
            <select id="symbol" className="h-[38px] w-full appearance-none border-2 border-[#adadad] bg-[#e1e1e1] pl-1 text-[19px]">
              <option>EURUSD, Euro vs US Dollar</option>
            </select>
            <Chevron />
          </div>

          <label htmlFor="volume" className="text-right">数量 :</label>
          <div className="relative w-[194px]">
            <select id="volume" className="h-[38px] w-full appearance-none border-2 border-[#808080] bg-white pl-2 text-[20px]">
              <option>0.01</option>
            </select>
            <Chevron />
          </div>

          <label htmlFor="stop" className="text-right whitespace-nowrap">決済逆指値(S/L)</label>
          <div className="flex h-[38px] items-center">
            <PriceInput id="stop" />
            <label htmlFor="profit" className="ml-auto pr-4">決済指値(T/P)</label>
            <PriceInput id="profit" />
          </div>

          <label htmlFor="comment" className="text-right">コメント :</label>
          <input id="comment" className="h-[38px] border-2 border-[#808080] bg-white px-2 text-[20px]" />

          <label htmlFor="kind" className="text-right">注文種別 :</label>
          <div className="relative">
            <select id="kind" className="h-10 w-full appearance-none border-2 border-[#0a5aa5] bg-[#cce4f7] pl-1 text-[22px]">
              <option>成行注文</option>
            </select>
            <Chevron />
            <div className="absolute top-full right-0 left-0 z-10 h-[50px] border-2 border-[#0078d7] bg-white pl-1">成行注文</div>
            {/* Highlighted area around the pending order option */}
            <div className="absolute top-[46px] -right-5 -left-5 z-20 bg-[#ffb9b9] px-5 py-5">
              <div className="bg-[#0078d7] pl-1 text-[20px] text-white">指値注文(Pending Order)</div>
            </div>
          </div>
        </div>

        <fieldset className="mt-3.5 flex-1 border-2 border-[#dcdcdc] px-7">
          <legend className="-ml-6 px-2 text-[22px] leading-6">成行注文</legend>
          <p className="mt-9 pr-3 text-center text-[48px] leading-[60px]">
            0.9558<span className="text-[36px]">9</span> / 0.9560<span className="text-[36px]">7</span>
          </p>
          <div className="mt-7 flex gap-[45px] text-[21px] leading-6">
            <button type="button" className="flex-1 border-2 border-[#adadad] bg-[#e1e1e1] p-0.5">
              <span className="block rounded-xs border-2 border-[#f07070] bg-[#ff8080] py-px">成行売り</span>
            </button>
            <button type="button" className="flex-1 border-2 border-[#adadad] bg-[#e1e1e1] p-0.5">
              <span className="block rounded-xs border-2 border-[#8cb0f5] bg-[#a0c0ff] py-px">成行買い</span>
            </button>
          </div>
          <button type="button" disabled aria-label="注文を送信" className="mt-4 block h-[39px] w-full border-2 border-[#bfbfbf] bg-[#cccccc]" />
          <p className="mt-6 text-center text-[21px] leading-6">
            ご注意！ 成行注文は、市場状況によって約定価格が決まりますので、必ずしも提示
            <br />
            価格で約定するとは限りません!
          </p>
        </fieldset>
      </form>
    </div>
  </section>
);

export default function App() {
  return (
    <div className="bg-white">
      <div className="flex h-screen flex-col rounded-[20px] bg-[#c9c8d4] px-3 pb-3 font-['Noto_Sans','Noto_Sans_CJK_JP',sans-serif] text-black [font-feature-settings:'palt']">
        <div className="flex h-[52px] shrink-0 items-center justify-center">
          <span className="size-[26px] rounded-full bg-white" />
        </div>
        <div className="flex min-h-0 flex-1 flex-col overflow-hidden bg-[#f0f0f0]">
          <nav className="flex h-[27px] shrink-0 items-start gap-7 pl-2 text-[14px] leading-6">
            {menus.map((menu) => (
              <button key={menu} type="button" className="whitespace-nowrap">{menu}</button>
            ))}
          </nav>
          <Toolbars />
          <main className="flex min-h-0 flex-1">
            <aside className="flex w-[319px] shrink-0 flex-col">
              <MarketWatch />
              <Navigator />
            </aside>
            <div className="relative ml-0.5 min-w-0 flex-1 overflow-hidden border-t-2 border-[#666] bg-[#888]">
              <Charts />
              <OrderDialog />
            </div>
          </main>
        </div>
      </div>
    </div>
  );
}
